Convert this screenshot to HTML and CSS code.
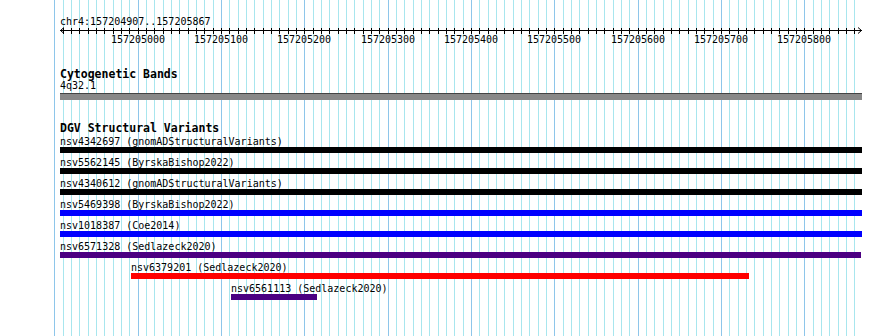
FILE: index.html
```html
<!DOCTYPE html>
<html lang="en">
<head>
    <meta charset="UTF-8">
    <meta name="viewport" content="width=device-width, initial-scale=1.0">
    <title>chr4:157204907..157205867</title>
    <link rel="stylesheet" href="styles.css">
</head>
<body>
    <div class="browser">
        <!-- grid lines, filled in by browser.js -->
        <div id="grid" class="grid"></div>

        <!-- RULER -->
        <div class="track ruler">
            <div class="location">chr4:157204907..157205867</div>
            <svg id="scale" class="scale" width="804" height="6">
                <line class="scale-line" x1="0" y1="2.5" x2="802" y2="2.5"></line>
                <polyline class="scale-line" points="4,-0.5 0.5,2.5 4,5.5"></polyline>
                <polyline class="scale-line" points="798,-0.5 801.5,2.5 798,5.5"></polyline>
            </svg>
            <div id="scaleLabels" class="scale-labels"></div>
        </div>

        <!-- CYTOGENETIC BANDS -->
        <div class="track cytobands">
            <div class="track-label">Cytogenetic Bands</div>
            <div class="band-name">4q32.1</div>
            <div class="band"></div>
        </div>

        <!-- DGV -->
        <div class="track dgv">
            <div class="track-label">DGV Structural Variants</div>
            <div class="rows">
                <div class="row">
                    <div class="feature" style="left:0px;width:802px">
                        <div class="feature-label">nsv4342697 (gnomADStructuralVariants)</div>
                        <div class="feature-bar black"></div>
                    </div>
                </div>
                <div class="row">
                    <div class="feature" style="left:0px;width:802px">
                        <div class="feature-label">nsv5562145 (ByrskaBishop2022)</div>
                        <div class="feature-bar black"></div>
                    </div>
                </div>
                <div class="row">
                    <div class="feature" style="left:0px;width:802px">
                        <div class="feature-label">nsv4340612 (gnomADStructuralVariants)</div>
                        <div class="feature-bar black"></div>
                    </div>
                </div>
                <div class="row">
                    <div class="feature" style="left:0px;width:802px">
                        <div class="feature-label">nsv5469398 (ByrskaBishop2022)</div>
                        <div class="feature-bar blue"></div>
                    </div>
                </div>
                <div class="row">
                    <div class="feature" style="left:0px;width:802px">
                        <div class="feature-label">nsv1018387 (Coe2014)</div>
                        <div class="feature-bar blue"></div>
                    </div>
                </div>
                <div class="row">
                    <div class="feature" style="left:0px;width:801px">
                        <div class="feature-label">nsv6571328 (Sedlazeck2020)</div>
                        <div class="feature-bar indigo"></div>
                    </div>
                </div>
                <div class="row">
                    <div class="feature" style="left:71px;width:618px">
                        <div class="feature-label">nsv6379201 (Sedlazeck2020)</div>
                        <div class="feature-bar red"></div>
                    </div>
                </div>
                <div class="row">
                    <div class="feature" style="left:171px;width:86px">
                        <div class="feature-label">nsv6561113 (Sedlazeck2020)</div>
                        <div class="feature-bar indigo"></div>
                    </div>
                </div>
            </div>
        </div>
    </div>

<script src="browser.js"></script>
</body>
</html>
```

FILE: styles.css
```css
body {
    margin: 0;
    padding: 0;
    background-color: #ffffff;
    color: #000000;
    font-family: "DejaVu Sans Mono", monospace;
    font-size: 10px;
}

.browser {
    position: relative;
    width: 890px;
    height: 336px;
    overflow: hidden;
}

/* grid lines behind every track */
.grid {
    position: absolute;
    top: 0;
    left: 0;
    width: 100%;
    height: 100%;
}
.gridline {
    position: absolute;
    top: 0;
    bottom: 0;
    width: 1px;
    background-color: #a8e6ee;
}
.gridline.major {
    background-color: #8ec6ea;
}

.track {
    position: relative;
    padding-left: 60px;
}

/* ruler */
.ruler {
    padding-top: 16px;
}
.location {
    line-height: 12px;
}
.scale {
    display: block;
    overflow: visible;
}
.scale-line,
.tick {
    stroke: #000000;
    stroke-width: 1;
    fill: none;
}
.scale-labels {
    position: relative;
    height: 11px;
    line-height: 11px;
}
.scale-label {
    position: absolute;
    top: 0;
    transform: translateX(-50%);
}

.track-label {
    font-size: 11.5px;
    font-weight: bold;
    line-height: 12px;
}

/* cytobands */
.cytobands {
    margin-top: 23px;
}
.band-name {
    line-height: 12px;
}
.band {
    margin-top: 1px;
    width: 802px;
    height: 6px;
    background-color: #888888;
    border-top: 1px solid #444444;
}

/* dgv */
.dgv {
    margin-top: 22px;
}
.rows {
    margin-top: 2px;
}
.row {
    position: relative;
    height: 21px;
}
.feature {
    position: absolute;
    top: 0;
}
.feature-label {
    line-height: 11px;
    white-space: nowrap;
}
.feature-bar {
    height: 6px;
}
.black {
    background-color: #000000;
}
.blue {
    background-color: #0000ff;
}
.indigo {
    background-color: #4b0082;
}
.red {
    background-color: #ff0000;
}
```

FILE: browser.js
```js
// visible region
var viewStart = 157204907;
var viewEnd = 157205867;
var offset = 60;
var pxPorBase = 800 / (viewEnd - viewStart);

function bpToX(bp) {
    return (bp - viewStart) * pxPorBase;
}

function dibujaGrid() {
    var grid = document.getElementById('grid');
    for (var bp = 157204900; bp <= 157205860; bp += 10) {
        var linea = document.createElement('div');
        linea.className = 'gridline';
        if (bp % 100 === 0) {
            linea.classList.add('major');
        }
        linea.style.left = Math.round(offset + bpToX(bp)) + 'px';
        grid.appendChild(linea);
    }
}

function dibujaRegla() {
    var svg = document.getElementById('scale');
    var etiquetas = document.getElementById('scaleLabels');
    for (var bp = 157204910; bp <= 157205860; bp += 10) {
        var x = Math.round(bpToX(bp)) + 0.5;
        var tick = document.createElementNS('http://www.w3.org/2000/svg', 'line');
        tick.setAttribute('class', 'tick');
        tick.setAttribute('x1', x);
        tick.setAttribute('x2', x);
        tick.setAttribute('y1', 0);
        tick.setAttribute('y2', 6);
        svg.appendChild(tick);

        if (bp % 100 === 0) {
            var label = document.createElement('span');
            label.className = 'scale-label';
            label.innerText = bp;
            label.style.left = Math.round(bpToX(bp)) + 'px';
            etiquetas.appendChild(label);
        }
    }
}

dibujaGrid();
dibujaRegla();
```
